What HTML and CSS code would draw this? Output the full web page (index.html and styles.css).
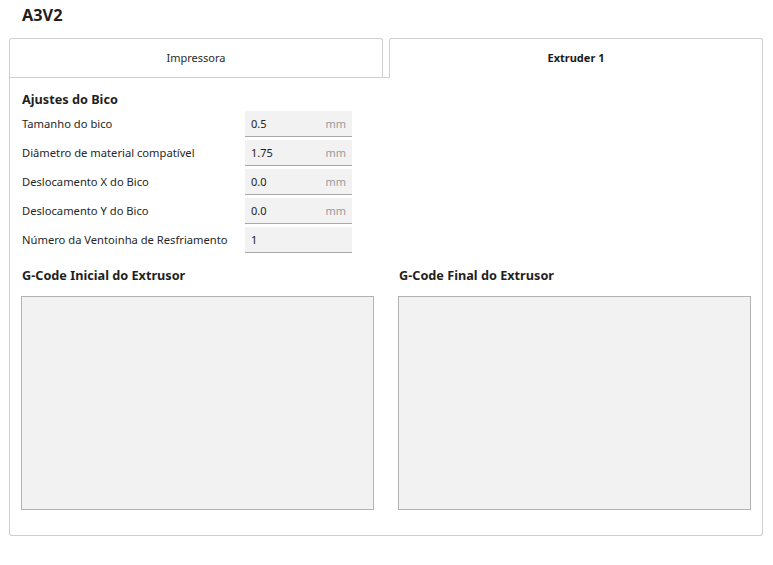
FILE: index.html
```html
<!DOCTYPE html>
<html lang="pt">
<head>
    <meta charset="UTF-8">
    <title>A3V2 - Extruder 1</title>
    <link rel="stylesheet" href="styles.css">
</head>
<body>

<div class="header">
    <h1>A3V2</h1>
</div>

<div class="tabs">
    <div class="tab">Impressora</div>
    <div class="tab active">Extruder 1</div>
</div>

<div class="panel">
    <h2>Ajustes do Bico</h2>

    <div class="settings">
        <div class="row">
            <label>Tamanho do bico</label>
            <div class="field"><span class="value">0.5</span><span class="unit">mm</span></div>
        </div>
        <div class="row">
            <label>Diâmetro de material compatível</label>
            <div class="field"><span class="value">1.75</span><span class="unit">mm</span></div>
        </div>
        <div class="row">
            <label>Deslocamento X do Bico</label>
            <div class="field"><span class="value">0.0</span><span class="unit">mm</span></div>
        </div>
        <div class="row">
            <label>Deslocamento Y do Bico</label>
            <div class="field"><span class="value">0.0</span><span class="unit">mm</span></div>
        </div>
        <div class="row">
            <label>Número da Ventoinha de Resfriamento</label>
            <div class="field"><span class="value">1</span></div>
        </div>
    </div>

    <div class="gcode">
        <div class="gcode-col">
            <h2>G-Code Inicial do Extrusor</h2>
            <div class="code-box"></div>
        </div>
        <div class="gcode-col">
            <h2>G-Code Final do Extrusor</h2>
            <div class="code-box"></div>
        </div>
    </div>
</div>

</body>
</html>
```

FILE: styles.css
```css
body {
    margin: 0;
    font-family: "Noto Sans", "Open Sans", sans-serif;
    color: #1f1f1f;
    background-color: #ffffff;
}
.header {
    height: 38px;
    box-sizing: border-box;
    padding: 4px 0 0 22px;
}
.header h1 {
    margin: 0;
    font-size: 16.3px;
    line-height: 22px;
    font-weight: bold;
}
.tabs {
    display: flex;
    align-items: flex-start;
    gap: 6px;
    margin: 0 10px 0 9px;
    border-bottom: 1px solid #cfcfcf;
}
.tab {
    flex: 1;
    height: 39px;
    box-sizing: border-box;
    border: 1px solid #cfcfcf;
    border-bottom: none;
    border-radius: 3px 3px 0 0;
    background-color: #ffffff;
    font-size: 11px;
    line-height: 38px;
    text-align: center;
    color: #2a2a2a;
}
.tab.active {
    height: 40px;
    margin-bottom: -1px;
    border-bottom: 1px solid #ffffff;
    font-weight: bold;
    color: #1a1a1a;
}
.panel {
    margin: 0 10px 0 9px;
    border: 1px solid #cfcfcf;
    border-top: none;
    border-radius: 0 0 3px 3px;
    padding: 12px 11px 25px 11px;
}
.panel h2 {
    margin: 0;
    padding-left: 1px;
    font-size: 12.7px;
    line-height: 18px;
    font-weight: bold;
    color: #1f1f1f;
}
.settings {
    display: flex;
    flex-direction: column;
    gap: 3px;
    margin-top: 3px;
    padding-left: 1px;
}
.row {
    display: grid;
    grid-template-columns: 223px 107px;
    align-items: center;
    height: 26px;
}
.row label {
    font-size: 11.2px;
    line-height: 24px;
    color: #262626;
}
.field {
    display: flex;
    justify-content: space-between;
    align-items: center;
    height: 26px;
    box-sizing: border-box;
    padding: 0 6px 1px 6px;
    background-color: #f2f2f2;
    border-bottom: 1px solid #a8a8a8;
    font-size: 11px;
}
.field .value {
    color: #222;
}
.field .unit {
    color: #9a9a9a;
}
.gcode {
    display: grid;
    grid-template-columns: 1fr 1fr;
    gap: 24px;
    margin-top: 13px;
}
.gcode-col h2 {
    margin-bottom: 12px;
}
.code-box {
    height: 214px;
    box-sizing: border-box;
    background-color: #f2f2f2;
    border: 1px solid #b3b3b3;
}
```
